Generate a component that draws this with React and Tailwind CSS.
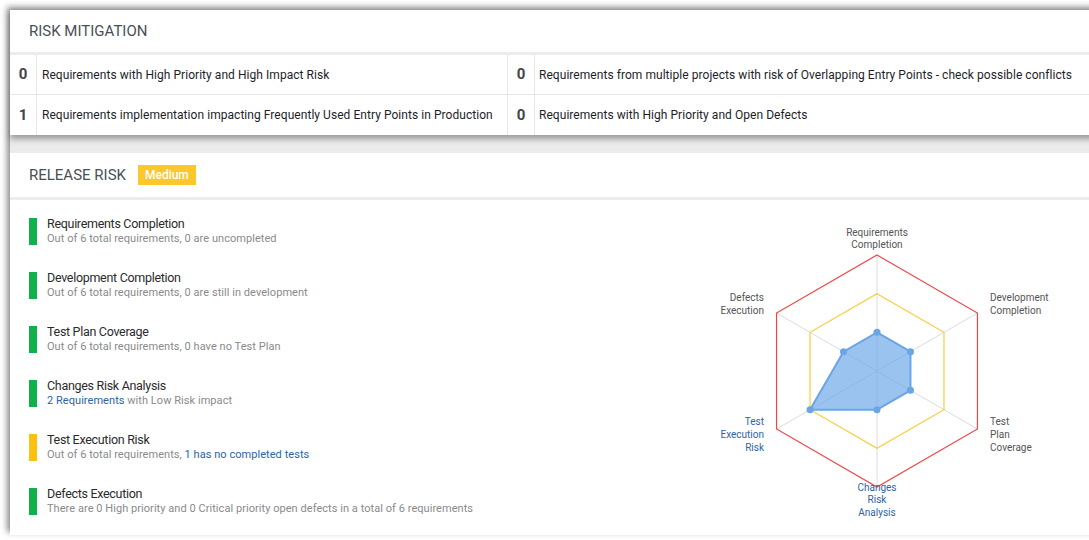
import React from 'react'

const font = { fontFamily: 'Roboto, "Liberation Sans", sans-serif' }

const mitigation = [
  [0, 'Requirements with High Priority and High Impact Risk', 0, 'Requirements from multiple projects with risk of Overlapping Entry Points - check possible conflicts'],
  [1, 'Requirements implementation impacting Frequently Used Entry Points in Production', 0, 'Requirements with High Priority and Open Defects'],
]

function Link({ children }) {
  return <span className="text-[#2a64a8]">{children}</span>
}

const risks = [
  { title: 'Requirements Completion', color: 'bg-[#10b04a]', sub: 'Out of 6 total requirements, 0 are uncompleted' },
  { title: 'Development Completion', color: 'bg-[#10b04a]', sub: 'Out of 6 total requirements, 0 are still in development' },
  { title: 'Test Plan Coverage', color: 'bg-[#10b04a]', sub: 'Out of 6 total requirements, 0 have no Test Plan' },
  { title: 'Changes Risk Analysis', color: 'bg-[#10b04a]', sub: <><Link>2 Requirements</Link> with Low Risk impact</> },
  { title: 'Test Execution Risk', color: 'bg-[#fdc010]', sub: <>Out of 6 total requirements, <Link>1 has no completed tests</Link></> },
  { title: 'Defects Execution', color: 'bg-[#10b04a]', sub: 'There are 0 High priority and 0 Critical priority open defects in a total of 6 requirements' },
]

const CX = 200
const CY = 171
const R = 116
const angles = [-90, -30, 30, 90, 150, 210]
const pt = (a, r) => [CX + r * Math.cos((a * Math.PI) / 180), CY + r * Math.sin((a * Math.PI) / 180)]
const hex = (r) => angles.map((a) => pt(a, r).join(',')).join(' ')
const values = [1 / 3, 1 / 3, 1 / 3, 1 / 3, 2 / 3, 1 / 3]

function Radar() {
  const data = angles.map((a, i) => pt(a, R * values[i]))
  const gray = '#555'
  const blue = '#2a64a8'
  return (
    <svg width="400" height="335" className="shrink-0" style={font}>
      {angles.map((a) => {
        const [x, y] = pt(a, R)
        return <line key={a} x1={CX} y1={CY} x2={x} y2={y} stroke="#dcdcdc" strokeWidth="1" />
      })}
      <polygon points={hex(R)} fill="none" stroke="#f04545" strokeWidth="1.2" />
      <polygon points={hex((R * 2) / 3)} fill="none" stroke="#fccb3c" strokeWidth="1.2" />
      <polygon points={data.map((p) => p.join(',')).join(' ')} fill="#6fa9ea" fillOpacity="0.7" stroke="#6aa6e6" strokeWidth="2" />
      {data.map(([x, y], i) => (
        <circle key={i} cx={x} cy={y} r="3.5" fill="#6aa6e6" />
      ))}
      <g fontSize="10">
        <text x="200" y="36" textAnchor="middle" fill={gray}>Requirements</text>
        <text x="200" y="48" textAnchor="middle" fill={gray}>Completion</text>
        <text x="313" y="101" fill={gray}>Development</text>
        <text x="313" y="114" fill={gray}>Completion</text>
        <text x="313" y="225" fill={gray}>Test</text>
        <text x="313" y="238" fill={gray}>Plan</text>
        <text x="313" y="251" fill={gray}>Coverage</text>
        <text x="200" y="291" textAnchor="middle" fill={blue}>Changes</text>
        <text x="200" y="303" textAnchor="middle" fill={blue}>Risk</text>
        <text x="200" y="316" textAnchor="middle" fill={blue}>Analysis</text>
        <text x="87" y="225" textAnchor="end" fill={blue}>Test</text>
        <text x="87" y="238" textAnchor="end" fill={blue}>Execution</text>
        <text x="87" y="251" textAnchor="end" fill={blue}>Risk</text>
        <text x="87" y="101" textAnchor="end" fill={gray}>Defects</text>
        <text x="87" y="114" textAnchor="end" fill={gray}>Execution</text>
      </g>
    </svg>
  )
}

export default function App() {
  return (
    <div className="h-[540px] overflow-hidden bg-white pl-[10px] pt-[10px]" style={font}>
      <div className="w-[1100px] bg-white shadow-[-3px_-3px_6px_rgba(0,0,0,0.45)]">
        {/* risk mitigation */}
        <div className="relative z-10 bg-white shadow-[0_4px_6px_rgba(0,0,0,0.35)]">
          <div className="flex h-[42px] items-center px-[19px] text-[15px] text-[#4a4f57]">RISK MITIGATION</div>
          <div className="border-t-[3px] border-[#ececec]">
            {mitigation.map((row, i) => (
              <div key={i} className="grid h-[40px] grid-cols-[27px_470px_28px_1fr] border-b border-[#e6e6e6] last:border-b-0 text-[12px] text-[#1e1e28]">
                <div className="flex items-center justify-center border-r border-[#e6e6e6] text-[15px] font-bold text-[#454545]">{row[0]}</div>
                <div className="flex items-center pl-[5px] tracking-[0.05px]">{row[1]}</div>
                <div className="flex items-center justify-center border-x border-[#e6e6e6] text-[15px] font-bold text-[#454545]">{row[2]}</div>
                <div className="flex items-center pl-[4px] tracking-[0.05px]">{row[3]}</div>
              </div>
            ))}
          </div>
        </div>
        <div className="h-[18px] bg-[#ebebeb]" />

        {/* release risk */}
        <div className="flex h-[44px] items-center gap-[12px] px-[19px]">
          <span className="text-[15px] text-[#4a4f57]">RELEASE RISK</span>
          <span className="bg-[#fcc72c] px-[7px] py-[1px] text-[12px] font-medium text-white">Medium</span>
        </div>
        <div className="flex border-t-[3px] border-[#ececec]">
          <div className="flex w-[667px] shrink-0 flex-col gap-[24px] pl-[19px] pt-[16px]">
            {risks.map((r) => (
              <div key={r.title} className="flex items-center gap-[10px]">
                <div className={`h-[27px] w-[8px] ${r.color}`} />
                <div className="leading-[15px]">
                  <div className="text-[12.5px] tracking-[-0.3px] text-[#2b2b2b]">{r.title}</div>
                  <div className="text-[11px] tracking-[0.05px] text-[#8a8a8a]">{r.sub}</div>
                </div>
              </div>
            ))}
          </div>
          <Radar />
        </div>
      </div>
    </div>
  )
}
